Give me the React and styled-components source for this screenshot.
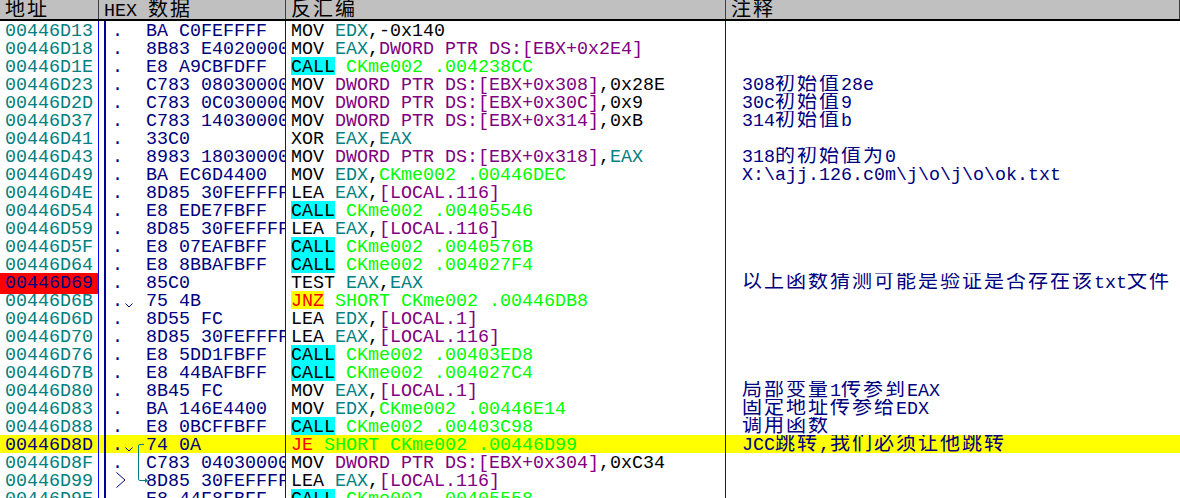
import React from 'react';
import styled, { createGlobalStyle } from 'styled-components';

const GlobalStyle = createGlobalStyle`
  html, body {
    margin: 0;
    padding: 0;
    background: #fff;
  }
`;

const COLORS = {
  teal: '#008080',
  navy: '#000080',
  purple: '#800080',
  lime: '#00ff00',
  red: '#ff0000',
  black: '#000000',
};

const MONO = '"Liberation Mono", "Noto Sans CJK SC", monospace';
const CJK = '"Noto Sans CJK SC", sans-serif';

const Window = styled.div`
  width: 1180px;
  height: 498px;
  overflow: hidden;
  background: #fff;
  font-family: ${MONO};
  font-size: 18.33px;
  line-height: 21px;
`;

const HeaderBar = styled.div`
  display: grid;
  grid-template-columns: 99px 187px 440px 1fr;
  height: 19px;
  background: #c0c0c0;
  border-bottom: 2px solid #000;
`;

const HeaderCell = styled.div`
  padding-left: 5px;
  border-right: 1px solid #404040;
  color: #000;
  line-height: 24px;
  white-space: pre;
  overflow: hidden;
`;

const Row = styled.div`
  display: grid;
  grid-template-columns: 99px 187px 440px 1fr;
  height: 18px;
  background: ${p => (p.$current ? '#ffff00' : 'transparent')};
`;

const AddrCell = styled.div`
  padding-left: 5px;
  color: ${p => (p.$breakpoint || p.$current ? COLORS.navy : COLORS.teal)};
  background: ${p => (p.$breakpoint ? '#ff0000' : 'transparent')};
  border-right: 1px solid #0000ff;
`;

const HexCell = styled.div`
  display: flex;
  padding-left: 5px;
  min-width: 0;
  border-right: 1px solid #0000ff;
`;

const MarkColumn = styled.div`
  position: relative;
  flex: 0 0 42px;
  display: flex;
  padding-left: 6px;
  box-sizing: border-box;
  border-left: 2px solid #0000a0;
  color: ${COLORS.navy};
`;

const HexText = styled.div`
  flex: 1;
  min-width: 0;
  overflow: hidden;
  white-space: pre;
  color: ${COLORS.navy};
`;

const DisasmCell = styled.div`
  padding-left: 5px;
  white-space: pre;
  overflow: hidden;
  border-right: 1px solid #0000ff;
`;

const NoteCell = styled.div`
  padding-left: 16px;
  white-space: pre;
  overflow: hidden;
  color: ${COLORS.navy};
`;

const Token = styled.span`
  color: ${p => COLORS[p.$color] || COLORS.black};
`;

// call/jump highlight is exactly one row tall, so it sits in a block of its own
const Chip = styled.span`
  display: inline-block;
  height: 18px;
  vertical-align: top;
  color: ${p => COLORS[p.$color] || COLORS.black};
  background: ${p => p.$bg};
`;

const Han = styled.span`
  font-family: ${CJK};
  font-size: 20px;
  letter-spacing: 2px;
  line-height: 0;
`;

const SmallChevron = styled.svg`
  width: 8px;
  height: 5px;
  margin: 12px 0 0 2px;
  flex: none;
`;

const JumpTarget = styled.svg`
  width: 10px;
  height: 16px;
  margin: 1px 0 0 4px;
  flex: none;
`;

const JumpLine = styled.svg`
  position: absolute;
  left: 30px;
  top: 8px;
  width: 12px;
  height: 40px;
  overflow: visible;
`;

// CJK glyphs are two columns wide (22px) next to 11px latin, so split the text into runs
const Wide = ({ text }) =>
  text.split(/([\u3000-\u9fff\uff00-\uffef]+)/).map((part, i) =>
    i % 2 ? <Han key={i}>{part}</Han> : part
  );

const Asm = ({ parts }) =>
  parts.map(([text, color, bg], i) =>
    bg ? (
      <Chip key={i} $color={color} $bg={bg}>{text}</Chip>
    ) : (
      <Token key={i} $color={color}>{text}</Token>
    )
  );

const reg = t => [t, 'teal'];
const mem = t => [t, 'purple'];
const plain = t => [t, 'black'];
const sym = t => [t, 'lime'];

const call = target => [['CALL', 'black', '#00ffff'], plain(' '), sym(`CKme002 .${target}`)];
const movMem = (off, val) => [plain('MOV '), mem(`DWORD PTR DS:[EBX+0x${off}]`), plain(','), val];
const lea = (r, n) => [plain('LEA '), reg(r), plain(','), mem(`[LOCAL.${n}]`)];

const ROWS = [
  { addr: '00446D13', hex: 'BA C0FEFFFF', asm: [plain('MOV '), reg('EDX'), plain(','), plain('-0x140')] },
  { addr: '00446D18', hex: '8B83 E4020000', asm: [plain('MOV '), reg('EAX'), plain(','), mem('DWORD PTR DS:[EBX+0x2E4]')] },
  { addr: '00446D1E', hex: 'E8 A9CBFDFF', asm: call('004238CC') },
  { addr: '00446D23', hex: 'C783 08030000', asm: movMem('308', plain('0x28E')), note: '308初始值28e' },
  { addr: '00446D2D', hex: 'C783 0C030000', asm: movMem('30C', plain('0x9')), note: '30c初始值9' },
  { addr: '00446D37', hex: 'C783 14030000', asm: movMem('314', plain('0xB')), note: '314初始值b' },
  { addr: '00446D41', hex: '33C0', asm: [plain('XOR '), reg('EAX'), plain(','), reg('EAX')] },
  { addr: '00446D43', hex: '8983 18030000', asm: movMem('318', reg('EAX')), note: '318的初始值为0' },
  { addr: '00446D49', hex: 'BA EC6D4400', asm: [plain('MOV '), reg('EDX'), plain(','), sym('CKme002 .00446DEC')], note: 'X:\\ajj.126.c0m\\j\\o\\j\\o\\ok.txt' },
  { addr: '00446D4E', hex: '8D85 30FEFFFF', asm: lea('EAX', 116) },
  { addr: '00446D54', hex: 'E8 EDE7FBFF', asm: call('00405546') },
  { addr: '00446D59', hex: '8D85 30FEFFFF', asm: lea('EAX', 116) },
  { addr: '00446D5F', hex: 'E8 07EAFBFF', asm: call('0040576B') },
  { addr: '00446D64', hex: 'E8 8BBAFBFF', asm: call('004027F4') },
  { addr: '00446D69', hex: '85C0', breakpoint: true, asm: [plain('TEST '), reg('EAX'), plain(','), reg('EAX')], note: '以上函数猜测可能是验证是否存在该txt文件' },
  { addr: '00446D6B', hex: '75 4B', jumps: true, asm: [['JNZ', 'red', '#ffff00'], plain(' '), sym('SHORT CKme002 .00446DB8')] },
  { addr: '00446D6D', hex: '8D55 FC', asm: lea('EDX', 1) },
  { addr: '00446D70', hex: '8D85 30FEFFFF', asm: lea('EAX', 116) },
  { addr: '00446D76', hex: 'E8 5DD1FBFF', asm: call('00403ED8') },
  { addr: '00446D7B', hex: 'E8 44BAFBFF', asm: call('004027C4') },
  { addr: '00446D80', hex: '8B45 FC', asm: [plain('MOV '), reg('EAX'), plain(','), mem('[LOCAL.1]')], note: '局部变量1传参到EAX' },
  { addr: '00446D83', hex: 'BA 146E4400', asm: [plain('MOV '), reg('EDX'), plain(','), sym('CKme002 .00446E14')], note: '固定地址传参给EDX' },
  { addr: '00446D88', hex: 'E8 0BCFFBFF', asm: call('00403C98'), note: '调用函数' },
  { addr: '00446D8D', hex: '74 0A', current: true, jumps: true, line: true, asm: [['JE', 'red'], plain(' '), sym('SHORT CKme002 .00446D99')], note: 'JCC跳转,我们必须让他跳转' },
  { addr: '00446D8F', hex: 'C783 04030000', asm: movMem('304', plain('0xC34')) },
  { addr: '00446D99', hex: '8D85 30FEFFFF', target: true, asm: lea('EAX', 116) },
  { addr: '00446D9E', hex: 'E8 44F8FBFF', asm: call('00405558') },
];

const Marker = ({ row }) => (
  <MarkColumn>
    {row.target ? (
      <JumpTarget viewBox="0 0 10 16">
        <path d="M0.5 0.5 L9 8 L0.5 15.5" fill="none" stroke={COLORS.navy} strokeWidth="1" />
      </JumpTarget>
    ) : (
      <span>.</span>
    )}
    {row.jumps && (
      <SmallChevron viewBox="0 0 8 5">
        <path d="M0.5 0.5 L4 4 L7.5 0.5" fill="none" stroke={COLORS.navy} strokeWidth="1" />
      </SmallChevron>
    )}
    {row.line && (
      <JumpLine viewBox="0 0 12 40">
        <path
          d="M8 1.5 H4 Q2.5 1.5 2.5 3 V36 Q2.5 37.5 4 37.5 H10"
          fill="none"
          stroke={COLORS.teal}
          strokeWidth="1"
        />
        <path d="M9 35 L12 37.5 L9 40 Z" fill={COLORS.teal} />
      </JumpLine>
    )}
  </MarkColumn>
);

const App = () => (
  <Window>
    <GlobalStyle />
    <HeaderBar>
      <HeaderCell><Wide text="地址" /></HeaderCell>
      <HeaderCell><Wide text="HEX 数据" /></HeaderCell>
      <HeaderCell><Wide text="反汇编" /></HeaderCell>
      <HeaderCell><Wide text="注释" /></HeaderCell>
    </HeaderBar>
    {ROWS.map(row => (
      <Row key={row.addr} $current={row.current}>
        <AddrCell $breakpoint={row.breakpoint} $current={row.current}>{row.addr}</AddrCell>
        <HexCell>
          <Marker row={row} />
          <HexText>{row.hex}</HexText>
        </HexCell>
        <DisasmCell><Asm parts={row.asm} /></DisasmCell>
        <NoteCell>{row.note && <Wide text={row.note} />}</NoteCell>
      </Row>
    ))}
  </Window>
);

export default App;
